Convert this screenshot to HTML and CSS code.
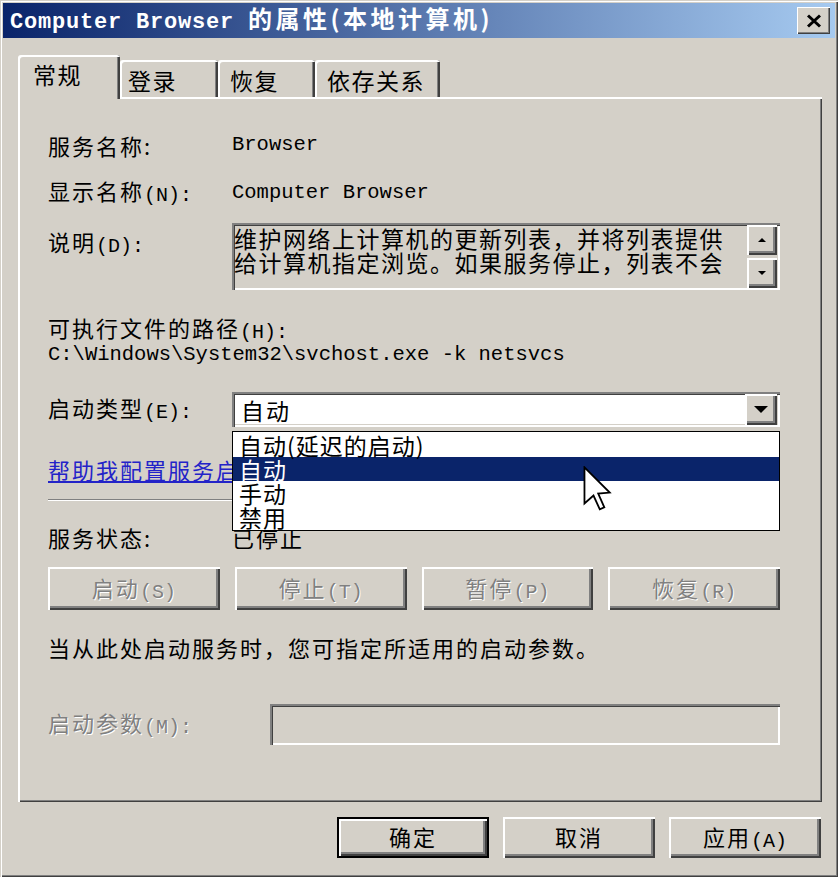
FILE: index.html
```html
<!DOCTYPE html>
<html lang="zh-CN">
<head>
<meta charset="utf-8">
<title>Computer Browser 的属性(本地计算机)</title>
<link rel="stylesheet" href="styles.css">
</head>
<body>
<div class="window">
  <div class="titlebar">
    <div class="title">Computer Browser <span class="title-cjk">的属性(本地计算机)</span></div>
    <div class="close raised">
      <svg width="16" height="14" viewBox="0 0 16 14"><path d="M2 1.5 L14 12.5 M14 1.5 L2 12.5" stroke="#000" stroke-width="3" fill="none"/></svg>
    </div>
  </div>
  <div class="main">
    <div class="tabs">
      <div class="tab tab-active tab-general">常规</div>
      <div class="tab tab-logon">登录</div>
      <div class="tab tab-recovery">恢复</div>
      <div class="tab tab-deps">依存关系</div>
    </div>
    <div class="panel">
      <div class="field row-name"><span>服务名称:</span><span class="mono">Browser</span></div>
      <div class="field row-display"><span>显示名称<span class="hk">(N):</span></span><span class="mono">Computer Browser</span></div>
      <div class="field row-desc">
        <span class="desc-label">说明<span class="hk">(D):</span></span>
        <div class="desc sunken">
          <div class="desc-text">维护网络上计算机的更新列表，并将列表提供<br>给计算机指定浏览。如果服务停止，列表不会</div>
          <div class="vscroll">
            <div class="sbtn raised"><span class="tri-up"></span></div>
            <div class="sbtn raised"><span class="tri-down"></span></div>
          </div>
        </div>
      </div>
      <div class="path-label">可执行文件的路径<span class="hk">(H):</span></div>
      <div class="path mono">C:\Windows\System32\svchost.exe -k netsvcs</div>
      <div class="field row-combo">
        <span>启动类型<span class="hk">(E):</span></span>
        <div class="combo sunken">
          <span class="combo-text">自动</span>
          <div class="combo-btn raised"><span class="tri-down tri-big"></span></div>
          <div class="dropdown">
            <div class="opt">自动(延迟的启动)</div>
            <div class="opt opt-sel">自动</div>
            <div class="opt">手动</div>
            <div class="opt">禁用</div>
          </div>
        </div>
      </div>
      <div class="row-link"><a class="link" href="#">帮助我配置服务启动选项。</a></div>
      <div class="sep"></div>
      <div class="field row-status"><span>服务状态:</span><span>已停止</span></div>
      <div class="actions">
        <div class="btn raised disabled">启动<span class="hk">(S)</span></div>
        <div class="btn raised disabled">停止<span class="hk">(T)</span></div>
        <div class="btn raised disabled">暂停<span class="hk">(P)</span></div>
        <div class="btn raised disabled">恢复<span class="hk">(R)</span></div>
      </div>
      <div class="hint">当从此处启动服务时，您可指定所适用的启动参数。</div>
      <div class="row-param">
        <span class="param-label disabled">启动参数<span class="hk">(M):</span></span>
        <div class="param-input sunken"></div>
      </div>
    </div>
    <div class="footer">
      <div class="btn raised btn-default">确定</div>
      <div class="btn raised">取消</div>
      <div class="btn raised">应用<span class="hk">(A)</span></div>
    </div>
  </div>
  <svg class="cursor" width="30" height="46" viewBox="-0.6 -0.6 13.2 20.4">
    <path d="M0 0 L0 16 L4 12.5 L6.8 18.6 L8.8 17.7 L6.1 11.6 L11.2 11.2 Z" fill="#fff" stroke="#000" stroke-width="0.8" stroke-linejoin="miter"/>
  </svg>
</div>
</body>
</html>
```
FILE: styles.css
```css
* { box-sizing: border-box; }

body {
  margin: 0;
  background: #d4d0c8;
}

.window {
  position: relative;
  width: 838px;
  height: 877px;
  padding: 3px;
  overflow: hidden;
  background: #d4d0c8;
  box-shadow: inset 1px 1px 0 #d4d0c8, inset 2px 2px 0 #ffffff,
              inset -1px -1px 0 #404040, inset -2px -2px 0 #808080;
  font-family: "Noto Sans CJK SC", sans-serif;
  font-size: 22px;
  line-height: 24px;
  letter-spacing: 2px;
  color: #000;
}

.raised {
  background: #d4d0c8;
  box-shadow: inset 2px 2px 0 #ffffff, inset -2px -2px 0 #404040, inset -4px -4px 0 #808080;
}

.sunken {
  box-shadow: inset 2px 2px 0 #808080, inset 3px 3px 0 #404040,
              inset -2px -2px 0 #ffffff, inset -3px -3px 0 #d4d0c8;
}

.hk {
  font-family: "Liberation Mono", monospace;
  font-size: 20px;
  letter-spacing: 0;
  vertical-align: -1px;
}

.mono {
  font-family: "Liberation Mono", monospace;
  font-size: 20.5px;
  letter-spacing: 0;
}

/* title bar */
.titlebar {
  height: 35px;
  display: flex;
  align-items: center;
  justify-content: space-between;
  padding: 0 5px 0 7px;
  background: linear-gradient(to right, #0a246a, #a6caf0);
}

.title {
  color: #fff;
  font-family: "Liberation Mono", monospace;
  font-weight: bold;
  font-size: 22px;
  letter-spacing: 0.8px;
  white-space: nowrap;
}

.title-cjk {
  font-family: "Noto Sans CJK SC", sans-serif;
  font-size: 24px;
  letter-spacing: 3.5px;
}

.close {
  width: 33px;
  height: 27px;
  display: flex;
  align-items: center;
  justify-content: center;
  box-shadow: inset 1px 1px 0 #ffffff, inset -1px -1px 0 #404040, inset -2px -2px 0 #808080;
}

/* body */
.main {
  padding: 17px 13px 0 15px;
}

.tabs {
  display: flex;
  align-items: flex-end;
  height: 42px;
  position: relative;
  z-index: 1;
}

.tab {
  height: 37px;
  padding-top: 8px;
  border-radius: 3px 3px 0 0;
  background: #d4d0c8;
  font-size: 23px;
  letter-spacing: 1.5px;
  box-shadow: inset 2px 2px 0 #ffffff, inset -2px 0 0 #404040, inset -3px 0 0 #808080;
  white-space: nowrap;
}

.tab-active {
  height: 44px;
  margin-bottom: -2px;
  padding-top: 7px;
}

.tab-general { width: 102px; padding-left: 15px; }
.tab-logon { width: 98px; padding-left: 8px; }
.tab-recovery { width: 97px; padding-left: 12px; }
.tab-deps { width: 125px; padding-left: 12px; }

.panel {
  height: 705px;
  padding: 36px 42px 0 30px;
  box-shadow: inset 2px 2px 0 #ffffff, inset -1px -1px 0 #404040, inset -2px -2px 0 #808080;
}

.field {
  display: grid;
  grid-template-columns: 184px 1fr;
  align-items: center;
}

.row-name { height: 24px; }
.row-display { height: 24px; margin-top: 21px; }

.row-desc {
  margin-top: 21px;
  height: 67px;
  align-items: start;
}

.desc-label { padding-top: 6px; }

.desc {
  height: 67px;
  display: flex;
}

.desc-text {
  flex: 1;
  padding: 3px 0 0 2px;
  font-size: 23px;
  letter-spacing: 1.5px;
  line-height: 24px;
}

.vscroll {
  width: 30px;
  margin: 2px 3px 2px 0;
  display: flex;
  flex-direction: column;
  justify-content: space-between;
}

.sbtn {
  height: 30px;
  display: flex;
  align-items: center;
  justify-content: center;
}

.tri-up {
  width: 0;
  height: 0;
  border-left: 4px solid transparent;
  border-right: 4px solid transparent;
  border-bottom: 4px solid #000;
}

.tri-down {
  width: 0;
  height: 0;
  border-left: 4px solid transparent;
  border-right: 4px solid transparent;
  border-top: 4px solid #000;
}

.tri-big {
  border-left-width: 7px;
  border-right-width: 7px;
  border-top-width: 7px;
}

.path-label { margin-top: 25px; height: 24px; }
.path { margin-top: 4px; height: 24px; line-height: 24px; }

.row-combo { margin-top: 25px; height: 35px; }

.combo {
  position: relative;
  height: 35px;
  background: #fff;
  display: flex;
  align-items: center;
  justify-content: space-between;
  padding: 0 3px 0 9px;
  font-size: 23px;
}

.combo-btn {
  width: 32px;
  height: 31px;
  display: flex;
  align-items: center;
  justify-content: center;
}

.dropdown {
  position: absolute;
  top: calc(100% + 4px);
  left: 0;
  right: 0;
  height: 100px;
  border: 1px solid #000;
  background: #fff;
  padding-top: 1px;
  z-index: 5;
}

.opt {
  height: 24px;
  line-height: 24px;
  padding-left: 6px;
  font-size: 23px;
  letter-spacing: 1px;
  white-space: nowrap;
}

.opt-sel {
  background: #0a246a;
  color: #fff;
}

.row-link { margin-top: 30px; height: 24px; }

.link {
  color: #2323c8;
  text-decoration: underline;
}

.sep {
  margin-top: 18px;
  height: 2px;
  border-top: 1px solid #808080;
  border-bottom: 1px solid #ffffff;
}

.row-status { margin-top: 24px; height: 24px; }

.actions {
  margin-top: 18px;
  display: grid;
  grid-template-columns: repeat(4, 1fr);
  gap: 15px;
}

.btn {
  display: block;
  height: 43px;
  padding-top: 8px;
  text-align: center;
  white-space: nowrap;
}

.disabled {
  color: #808080;
  text-shadow: 1px 1px 0 #ffffff;
}

.hint { margin-top: 25px; height: 24px; }

.row-param {
  margin-top: 45px;
  display: flex;
  align-items: center;
  height: 41px;
}

.param-label { width: 222px; }

.param-input {
  flex: 1;
  height: 41px;
  background: #d4d0c8;
}

.footer {
  margin-top: 15px;
  padding-right: 1px;
  display: flex;
  justify-content: flex-end;
  gap: 14px;
}

.footer .btn {
  width: 152px;
  height: 41px;
  padding-top: 7px;
}

.footer .btn-default {
  border: 2px solid #000;
  padding-top: 5px;
}

.cursor {
  position: absolute;
  left: 583px;
  top: 466px;
  z-index: 10;
}
```
